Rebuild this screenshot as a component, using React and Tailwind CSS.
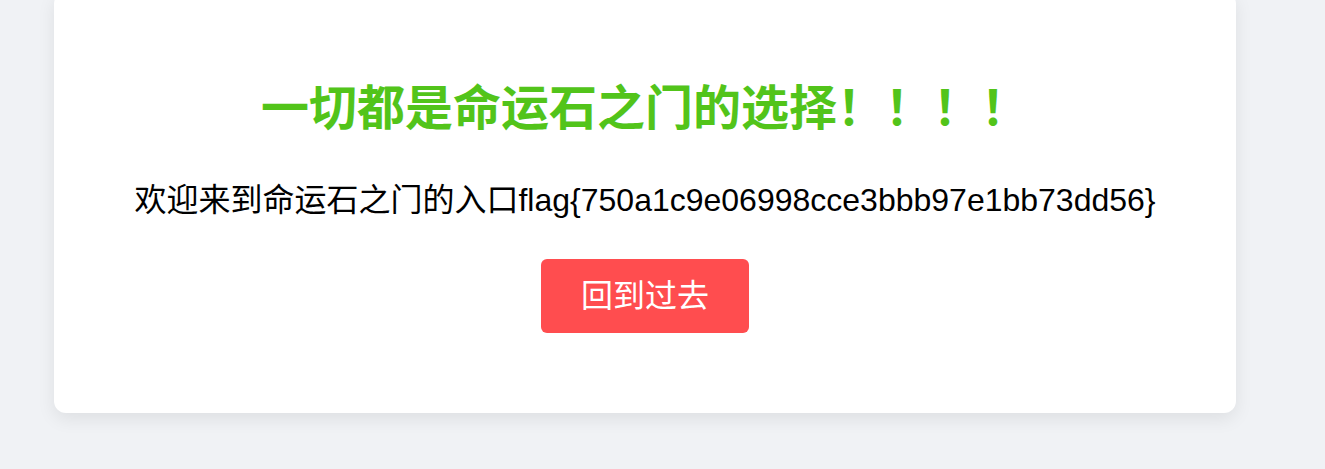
const App = () => {
    return (
        <div className="min-h-[469px] bg-[#f0f2f5] overflow-hidden px-[54px]" style={{ fontFamily: '"Liberation Sans", Arial, "Noto Sans CJK SC", sans-serif' }}>
            <div className="w-[1182px] -mt-[8px] bg-white rounded-xl shadow-[0_6px_18px_rgba(0,0,0,0.08)] pt-[81px] pb-[80px] flex flex-col items-center">
                <h1 className="text-[48px] leading-[72px] font-bold text-[#52c41a]">一切都是命运石之门的选择！！！！</h1>
                <p className="mt-[31px] text-[32px] leading-[48px] text-black">欢迎来到命运石之门的入口flag&#123;750a1c9e06998cce3bbb97e1bb73dd56&#125;</p>
                <button className="mt-[35px] h-[74px] px-10 bg-[#ff4d4f] text-white text-[32px] rounded-md">回到过去</button>
            </div>
        </div>
    )
}

export default App
